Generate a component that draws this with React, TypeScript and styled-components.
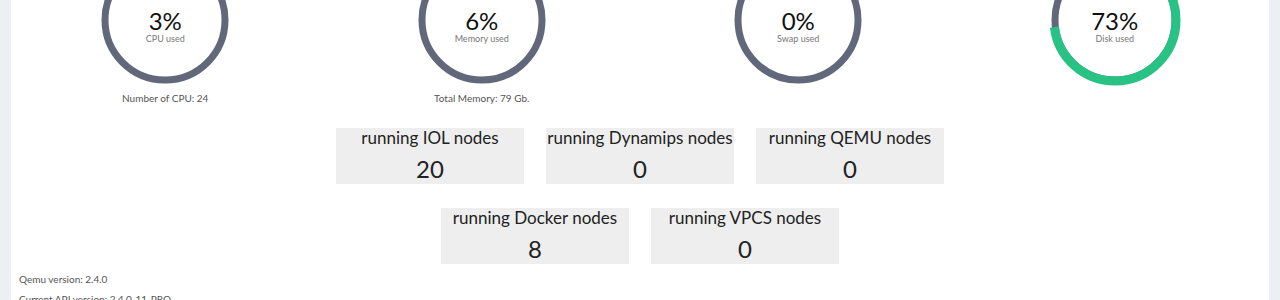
import React from 'react';
import styled, { createGlobalStyle } from 'styled-components';

const GlobalStyle = createGlobalStyle`
  html, body {
    margin: 0;
    padding: 0;
    background: #ecf0f5;
    font-family: Lato, 'Open Sans', sans-serif;
    overflow: hidden;
  }
`;

type GaugeData = {
  value: number;
  label: string;
  note?: string;
  highlight?: boolean;
};

const gauges: GaugeData[] = [
  { value: 3, label: 'CPU used', note: 'Number of CPU: 24' },
  { value: 6, label: 'Memory used', note: 'Total Memory: 79 Gb.' },
  { value: 0, label: 'Swap used' },
  { value: 73, label: 'Disk used', highlight: true },
];

const nodeRows = [
  [
    { name: 'IOL', count: 20 },
    { name: 'Dynamips', count: 0 },
    { name: 'QEMU', count: 0 },
  ],
  [
    { name: 'Docker', count: 8 },
    { name: 'VPCS', count: 0 },
  ],
];

const Gauge = ({ value, label, note, highlight }: GaugeData) => {
  const r = 61;
  const circ = 2 * Math.PI * r;
  return (
    <GaugeCol>
      <Dial>
        <svg width="132" height="132" viewBox="0 0 132 132">
          <circle cx="66" cy="66" r="60" fill="none" stroke="#61687a" strokeWidth="7" />
          {highlight && (
            <circle
              cx="66"
              cy="66"
              r={r}
              fill="none"
              stroke="#29c285"
              strokeWidth="9"
              strokeDasharray={`${(circ * value) / 100} ${circ}`}
              transform="rotate(-90 66 66)"
            />
          )}
        </svg>
        <DialText>
          <Percent>{value}%</Percent>
          <DialLabel>{label}</DialLabel>
        </DialText>
      </Dial>
      {note && <Note>{note}</Note>}
    </GaugeCol>
  );
};

const App = () => {
  return (
    <>
      <GlobalStyle />
      <Content>
        <GaugeRow>
          {gauges.map((g) => (
            <Gauge key={g.label} {...g} />
          ))}
        </GaugeRow>

        <NodeArea>
          {nodeRows.map((row, i) => (
            <NodeRow key={i}>
              {row.map((n) => (
                <NodeBox key={n.name}>
                  <NodeTitle>running {n.name} nodes</NodeTitle>
                  <NodeCount>{n.count}</NodeCount>
                </NodeBox>
              ))}
            </NodeRow>
          ))}
        </NodeArea>

        <Versions>
          <p>Qemu version: 2.4.0</p>
          <p>Current API version: 2.4.0-11-PRO</p>
        </Versions>
      </Content>
    </>
  );
};

const Content = styled.div`
  background: #fff;
  margin: -46px 11px 0 11px;
  padding: 0 8px 20px 8px;
  min-height: 400px;
`;

const GaugeRow = styled.div`
  display: grid;
  grid-template-columns: repeat(4, 316.5px);
  margin: 0 -12px;
`;

const GaugeCol = styled.div`
  display: flex;
  flex-direction: column;
  align-items: center;
  height: 152px;
`;

const Dial = styled.div`
  position: relative;
  width: 132px;
  height: 132px;
`;

const DialText = styled.div`
  position: absolute;
  left: 0;
  right: 0;
  top: 54px;
  display: flex;
  flex-direction: column;
  align-items: center;
`;

const Percent = styled.div`
  font-size: 24px;
  line-height: 26px;
  color: #111;
`;

const DialLabel = styled.div`
  font-size: 9px;
  line-height: 11px;
  margin-top: -1px;
  color: #777;
`;

const Note = styled.div`
  margin-top: 5px;
  font-size: 10px;
  line-height: 14px;
  color: #555;
`;

const NodeArea = styled.div`
  display: flex;
  flex-direction: column;
  gap: 24px;
  margin-top: 22px;
`;

const NodeRow = styled.div`
  display: flex;
  justify-content: center;
  gap: 22px;
`;

const NodeBox = styled.div`
  width: 188px;
  height: 56px;
  background: #eeeeee;
  display: flex;
  flex-direction: column;
  align-items: center;
  color: #222;
`;

const NodeTitle = styled.div`
  font-size: 17px;
  line-height: 20px;
  margin-top: 0;
`;

const NodeCount = styled.div`
  font-size: 24px;
  line-height: 30px;
  margin-top: 6px;
`;

const Versions = styled.div`
  margin-top: 10px;
  font-size: 10px;
  color: #555;

  p {
    margin: 0 0 10px 0;
    line-height: 10px;
  }
`;

export default App;
